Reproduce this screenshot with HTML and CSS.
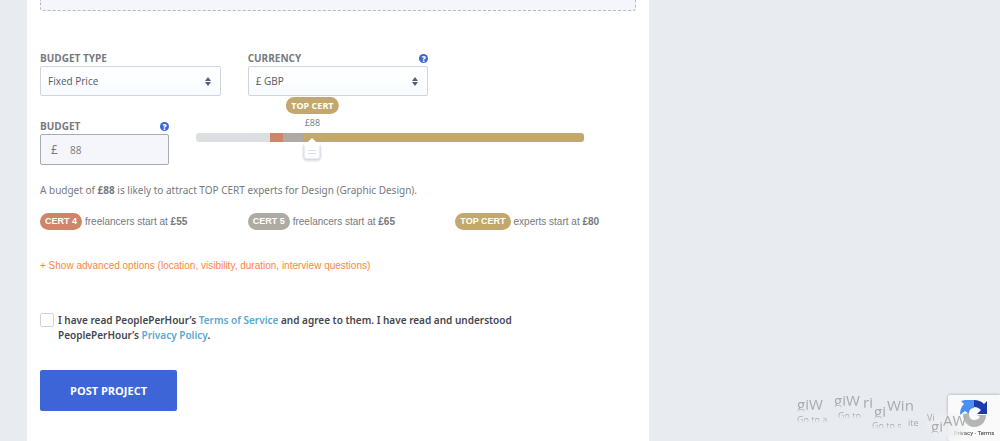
FILE: index.html
```
<!DOCTYPE html>
<html lang="en">
<head>
    <meta charset="UTF-8">
    <meta name="viewport" content="width=device-width, initial-scale=1.0">
    <title>Post a Project</title>
    <link rel="stylesheet" href="styles.css">
</head>
<body>
    <main class="panel">
        <div class="dropzone"></div>

        <form class="project-form">
            <div class="columns">
                <div class="field">
                    <div class="field-head">
                        <label for="budget-type">BUDGET TYPE</label>
                    </div>
                    <div class="select-wrap">
                        <select id="budget-type">
                            <option>Fixed Price</option>
                        </select>
                        <svg class="arrows" viewBox="0 0 6 9" aria-hidden="true"><path d="M3 0L6 4H0zM3 9L0 5h6z"/></svg>
                    </div>
                </div>
                <div class="field">
                    <div class="field-head">
                        <label for="currency">CURRENCY</label>
                        <button type="button" class="help" aria-label="Currency help">?</button>
                    </div>
                    <div class="select-wrap">
                        <select id="currency">
                            <option>£ GBP</option>
                        </select>
                        <svg class="arrows" viewBox="0 0 6 9" aria-hidden="true"><path d="M3 0L6 4H0zM3 9L0 5h6z"/></svg>
                    </div>
                </div>
            </div>

            <div class="budget-row">
                <div class="field budget-field">
                    <div class="field-head">
                        <label for="budget">BUDGET</label>
                        <button type="button" class="help" aria-label="Budget help">?</button>
                    </div>
                    <div class="money">
                        <span class="money-sign">£</span>
                        <input type="text" id="budget" value="88">
                    </div>
                </div>
                <div class="slider">
                    <div class="bubble">
                        <span class="pill pill-top">TOP CERT</span>
                        <span class="bubble-price">£88</span>
                    </div>
                    <input type="range" class="range" min="0" max="304" value="88" aria-label="Budget">
                </div>
            </div>

            <p class="summary">A budget of <strong>£88</strong> is likely to attract TOP CERT experts for Design (Graphic Design).</p>

            <div class="columns certs">
                <div class="cert"><span class="pill pill-4">CERT 4</span><span>freelancers start at <b>£55</b></span></div>
                <div class="cert"><span class="pill pill-5">CERT 5</span><span>freelancers start at <b>£65</b></span></div>
                <div class="cert"><span class="pill pill-top">TOP CERT</span><span>experts start at <b>£80</b></span></div>
            </div>

            <a href="#" class="advanced">+ Show advanced options (location, visibility, duration, interview questions)</a>

            <div class="terms">
                <input type="checkbox" id="agree">
                <label for="agree">I have read PeoplePerHour’s <a href="#">Terms of Service</a> and agree to them. I have read and understood PeoplePerHour’s <a href="#">Privacy Policy</a>.</label>
            </div>

            <button type="submit" class="submit">POST PROJECT</button>
        </form>
    </main>

    <aside class="recaptcha">
        <svg class="recaptcha-logo" viewBox="0 0 28 28" aria-hidden="true">
            <path fill="#1c3aa9" d="M14 0c4 0 7 1 10 4l3-3v13H17l4-4c-2-2-4-3-7-3z"/>
            <path fill="#4a90f4" d="M14 0v8c-3 0-5 2-5 6l-4-3-5 4C0 10 1 7 4 4L1 1 5 0z"/>
            <path fill="#b4b5b7" d="M3 14l6-1c0 5 2 7 5 7 3 0 5-1 6-3l-3-2h9c0 7-5 12-12 12C8 27 3 22 3 14z"/>
        </svg>
        <div class="recaptcha-links"><a href="#">Privacy</a> - <a href="#">Terms</a></div>
    </aside>

    <!-- broken-up activation notice, floats over the badge -->
    <div class="watermark" aria-hidden="true">
        <span class="wm wm-1">giW</span>
        <span class="wm wm-2">giW</span>
        <span class="wm wm-3">ri</span>
        <span class="wm wm-4">gi</span>
        <span class="wm wm-5">Win</span>
        <span class="wm wm-6">gi</span>
        <span class="wm wm-7">AW</span>
        <span class="wm wm-small wm-8">Go to a</span>
        <span class="wm wm-small wm-9">Go to</span>
        <span class="wm wm-small wm-10">Go to s</span>
        <span class="wm wm-small wm-11">ite</span>
        <span class="wm wm-small wm-12">Vi</span>
    </div>
</body>
</html>
```
FILE: styles.css
```
:root {
    --page: #e8ebf0;
    --blue: #3d65d8;
    --gold: #c2a86e;
    --copper: #ce8669;
    --silver: #afaaa4;
    --text: #767980;
    --border: #d0d4e2;
}

* {
    margin: 0;
    padding: 0;
    box-sizing: border-box;
}

body {
    min-height: 100vh;
    background: var(--page);
    color: var(--text);
    font-family: 'Open Sans', sans-serif;
    font-size: 10px;
    line-height: 15px;
    overflow: hidden;
}

a {
    text-decoration: none;
}

.panel {
    width: 62.2%;
    min-height: 100vh;
    margin-left: 27px;
    padding: 0 13px 30px;
    background: #fff;
}

.dropzone {
    height: 11px;
    border: 1px dashed #b9bac0;
    border-top: 0;
    border-radius: 0 0 3px 3px;
    background: #f5f6fb;
}

.project-form {
    padding-top: 40px;
}

.columns {
    display: grid;
    grid-template-columns: repeat(3, 1fr);
    column-gap: 27px;
}

.field-head {
    display: flex;
    justify-content: space-between;
    align-items: center;
    height: 15px;
    font-weight: 700;
}

.help {
    width: 9px;
    height: 9px;
    border: 0;
    border-radius: 50%;
    background: var(--blue);
    color: #fff;
    font: 800 8px/9px 'Open Sans', sans-serif;
}

.select-wrap {
    display: grid;
    align-items: center;
}

.select-wrap > * {
    grid-area: 1 / 1;
}

select {
    appearance: none;
    width: 100%;
    height: 30px;
    padding: 0 7px;
    border: 1px solid var(--border);
    border-radius: 2px;
    background: linear-gradient(#fff, #f8fcff);
    color: #565960;
    font: 10px 'Open Sans', sans-serif;
}

.arrows {
    justify-self: end;
    width: 6px;
    height: 9px;
    margin-right: 10px;
    fill: #5a5d78;
    pointer-events: none;
}

.budget-row {
    display: flex;
    gap: 27px;
    margin-top: 23px;
}

.budget-field {
    width: 129px;
}

.money {
    display: flex;
    align-items: center;
    height: 31px;
    border: 1px solid #a9abb2;
    border-radius: 2px;
    background: #f5f6fb;
}

.money-sign {
    width: 29px;
    padding-left: 10px;
    font-size: 12px;
}

.money input {
    flex: 1;
    min-width: 0;
    border: 0;
    outline: 0;
    background: none;
    color: var(--text);
    font: 10px 'Open Sans', sans-serif;
}

.slider {
    flex: 1;
    position: relative;
    margin-right: 52px;
    padding-top: 14px;
}

.bubble {
    position: absolute;
    left: 30%;
    top: -22px;
    display: flex;
    flex-direction: column;
    align-items: center;
    transform: translateX(-50%);
}

.bubble .pill {
    font-family: 'Open Sans', sans-serif;
}

.bubble-price {
    font-size: 9px;
    line-height: 17px;
}

.range {
    appearance: none;
    display: block;
    width: 100%;
    height: 28px;
    background: none;
}

.range::-webkit-slider-runnable-track {
    height: 9px;
    margin-bottom: 19px;
    border-radius: 3px;
    background: linear-gradient(90deg, #dddee2 19%, var(--copper) 19% 22.5%, var(--silver) 22.5% 27.5%, var(--gold) 27.5%);
}

.range::-webkit-slider-thumb {
    appearance: none;
    width: 18px;
    height: 24px;
    margin-top: 4px;
    background: url("data:image/svg+xml,%3Csvg xmlns='http://www.w3.org/2000/svg' viewBox='0 0 18 24'%3E%3Cpath d='M9 1L13 5H15Q17 5 17 7V20Q17 22 15 22H3Q1 22 1 20V7Q1 5 3 5H5Z' fill='%23fff'/%3E%3Cpath d='M1 9V20Q1 22 3 22H15Q17 22 17 20V9' fill='none' stroke='%23d9dbe6'/%3E%3Cpath d='M5 13.5H13M5 16.5H13' stroke='%23dcddec'/%3E%3C/svg%3E");
    filter: drop-shadow(0 1px 1px #c9cbd8);
}

.summary {
    margin-top: 18px;
    font-family: 'Noto Sans', sans-serif;
}

.certs {
    margin-top: 15px;
}

.cert {
    display: flex;
    align-items: center;
    gap: 3px;
    font: 10px/15px 'Liberation Sans', sans-serif;
    white-space: nowrap;
}

.pill {
    padding: 0 5px;
    border-radius: 9px;
    color: #fff;
    font: 700 9px/17px 'Liberation Sans', sans-serif;
    white-space: nowrap;
}

.pill-4 {
    background: var(--copper);
}

.pill-5 {
    background: var(--silver);
}

.pill-top {
    background: var(--gold);
}

.advanced {
    display: block;
    margin-top: 28px;
    color: #fb8643;
    font: 10px/15px 'Liberation Sans', sans-serif;
}

.terms {
    display: flex;
    gap: 4px;
    max-width: 510px;
    margin-top: 40px;
    color: #45464f;
    font-family: 'Noto Sans', sans-serif;
    font-weight: 600;
}

.terms input {
    appearance: none;
    flex: none;
    width: 14px;
    height: 14px;
    border: 1px solid var(--border);
    border-radius: 2px;
    background: #fff;
}

.terms a {
    color: #58a8cf;
}

.submit {
    margin-top: 27px;
    padding: 13px 30px;
    border: 0;
    border-radius: 2px;
    background: var(--blue);
    color: #fff;
    font: 700 11px/15px 'Open Sans', sans-serif;
}

.recaptcha {
    position: fixed;
    right: 0;
    bottom: 0;
    width: 52px;
    height: 46px;
    padding-top: 5px;
    border-radius: 2px 0 0 2px;
    background: #fafafa;
    box-shadow: 0 0 3px #999;
    text-align: center;
}

.recaptcha-logo {
    display: block;
    width: 28px;
    height: 28px;
    margin: 0 auto;
}

.recaptcha-links {
    color: #333;
    font: 6px/10px Roboto, sans-serif;
    white-space: nowrap;
}

.recaptcha-links a {
    color: #333;
}

.watermark {
    position: fixed;
    right: 0;
    bottom: 0;
    width: 212px;
    height: 51px;
    background: radial-gradient(ellipse 24px 18px at 158px 38px, rgba(238, 239, 241, 0.9) 40%, transparent);
    color: #a8aaae;
    pointer-events: none;
}

.wm {
    position: absolute;
    font-size: 15px;
    line-height: 18px;
    mask-image: linear-gradient(#000 75%, transparent 95%);
}

.wm-small {
    font-size: 9px;
    line-height: 12px;
    white-space: nowrap;
    mask-image: linear-gradient(#000 40%, transparent 75%);
}

.wm-1 { left: 9px; top: 5px; }
.wm-2 { left: 46px; top: 1px; }
.wm-3 { left: 75px; top: 3px; }
.wm-4 { left: 86px; top: 12px; }
.wm-5 { left: 99px; top: 6px; }
.wm-6 { left: 143px; top: 27px; }
.wm-7 { left: 155px; top: 21px; }
.wm-8 { left: 9px; top: 24px; }
.wm-9 { left: 50px; top: 20px; }
.wm-10 { left: 84px; top: 30px; }
.wm-11 { left: 120px; top: 27px; mask-image: none; }
.wm-12 { left: 139px; top: 22px; mask-image: none; }
```
